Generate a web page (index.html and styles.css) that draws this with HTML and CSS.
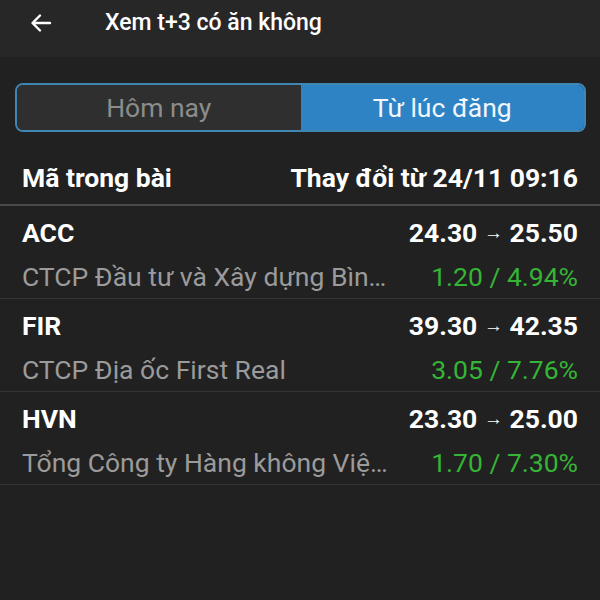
FILE: index.html
```html
<!DOCTYPE html>
<html lang="vi">
  <head>
    <meta charset="UTF-8" />
    <meta name="viewport" content="width=device-width, initial-scale=1.0" />
    <title>Xem t+3 có ăn không</title>
    <link rel="stylesheet" href="styles.css">
  </head>
  <body>
    <div class="topbar">
      <span class="back">
        <svg width="24" height="24" viewBox="0 0 24 24">
          <path d="M21 12H4M11 4.5L3.5 12L11 19.5" fill="none" stroke="#fff" stroke-width="2.4" stroke-linecap="round" stroke-linejoin="round" />
        </svg>
      </span>
      <span class="title">Xem t+3 có ăn không</span>
    </div>

    <div class="tabs">
      <div class="tab">Hôm nay</div>
      <div class="tab active">Từ lúc đăng</div>
    </div>

    <div class="list-head">
      <span>Mã trong bài</span>
      <span>Thay đổi từ 24/11 09:16</span>
    </div>

    <div class="row">
      <div class="line">
        <span class="code">ACC</span>
        <span class="price">24.30 <span class="arrow">→</span> 25.50</span>
      </div>
      <div class="line">
        <span class="name">CTCP Đầu tư và Xây dựng Bình Dương ACC</span>
        <span class="change">1.20 / 4.94%</span>
      </div>
    </div>
    <div class="row">
      <div class="line">
        <span class="code">FIR</span>
        <span class="price">39.30 <span class="arrow">→</span> 42.35</span>
      </div>
      <div class="line">
        <span class="name">CTCP Địa ốc First Real</span>
        <span class="change">3.05 / 7.76%</span>
      </div>
    </div>
    <div class="row">
      <div class="line">
        <span class="code">HVN</span>
        <span class="price">23.30 <span class="arrow">→</span> 25.00</span>
      </div>
      <div class="line">
        <span class="name">Tổng Công ty Hàng không Việt Nam</span>
        <span class="change">1.70 / 7.30%</span>
      </div>
    </div>
  </body>
</html>
```

FILE: styles.css
```css
body {
  margin: 0;
  background-color: #212121;
  color: #fff;
  font-family: Roboto, "Noto Sans", sans-serif;
}
.topbar {
  display: flex;
  align-items: center;
  height: 45px;
  padding-bottom: 12px;
  background-color: #272727;
}
.back {
  display: flex;
  margin-left: 29px;
  width: 24px;
}
.title {
  margin-left: 52px;
  font-size: 23px;
  font-weight: 500;
}
.tabs {
  display: flex;
  margin: 26px 14px 0 15px;
  height: 45px;
  border: 2px solid #3f86b3;
  border-radius: 8px;
  overflow: hidden;
}
.tab {
  flex: 1;
  display: flex;
  align-items: center;
  justify-content: center;
  background-color: #2f2f2f;
  color: #8c8c8c;
  font-size: 26.5px;
}
.tab.active {
  background-color: #2e83c5;
  color: #f2f6fa;
}
.list-head {
  display: flex;
  justify-content: space-between;
  align-items: center;
  height: 54px;
  padding: 18px 22px 0 22px;
  border-bottom: 2px solid #4a4a4a;
  font-size: 26.5px;
  font-weight: 700;
}
.row {
  padding: 4px 22px 0 22px;
  height: 88px;
  border-bottom: 1px solid #353535;
}
.line {
  display: flex;
  justify-content: space-between;
  align-items: center;
  height: 44px;
  white-space: nowrap;
}
.code,
.price {
  font-size: 26.5px;
  font-weight: 700;
}
.arrow {
  font-size: 19px;
  font-weight: 400;
  line-height: 1;
  vertical-align: 3px;
}
.name {
  flex: 1;
  overflow: hidden;
  text-overflow: ellipsis;
  margin-right: 38px;
  color: #9b9b9b;
  font-size: 26.5px;
}
.change {
  color: #35b535;
  font-size: 26.5px;
}
```
